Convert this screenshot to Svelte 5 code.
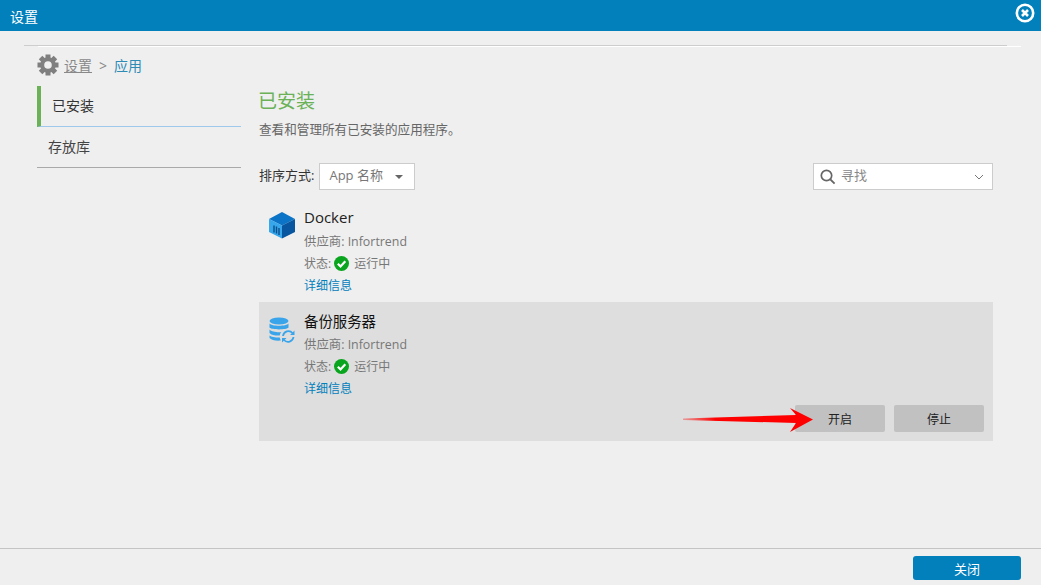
<script>
    const apps = [
        { name: 'Docker', icon: 'docker', active: false },
        { name: '备份服务器', icon: 'backup', active: true }
    ];
    const teeth = [0, 45, 90, 135, 180, 225, 270, 315];
</script>

<div class="window">
    <header class="titlebar">
        <span>设置</span>
        <svg class="close-x" width="20" height="20" viewBox="0 0 20 20">
            <circle cx="10" cy="10" r="8.200" fill="none" stroke="#fff" stroke-width="2.600" />
            <path d="M7 7l6 6M13 7l-6 6" stroke="#fff" stroke-width="2.600" />
        </svg>
    </header>

    <main class="body">
        <div class="clipped">
            <span class="clipped-text">应用程序</span>
        </div>
        <div class="rule"></div>

        <nav class="crumbs">
            <svg width="22" height="22" viewBox="0 0 22 22">
                <g fill="#7f7f7f">
                    {#each teeth as angle}
                        <rect x="8.500" y="0.500" width="5" height="5" transform="rotate({angle} 11 11)" />
                    {/each}
                </g>
                <circle cx="11" cy="11" r="5.800" fill="none" stroke="#7f7f7f" stroke-width="4" />
            </svg>
            <a class="parent" href="#top">设置</a>
            <span class="sep">&gt;</span>
            <span class="current">应用</span>
        </nav>

        <div class="columns">
            <aside class="side">
                <div class="side-item selected">已安装</div>
                <div class="side-item">存放库</div>
            </aside>

            <section class="content">
                <h1>已安装</h1>
                <p class="desc">查看和管理所有已安装的应用程序。</p>

                <div class="toolbar">
                    <label class="sort-label" for="sort">排序方式:</label>
                    <div class="select" id="sort">App 名称<span class="caret"></span></div>
                    <div class="search">
                        <svg width="16" height="16" viewBox="0 0 16 16">
                            <circle cx="6.500" cy="6.500" r="5.200" fill="none" stroke="#666" stroke-width="1.700" />
                            <path d="M10.300 10.300l4.300 4.300" stroke="#666" stroke-width="1.900" />
                        </svg>
                        <span class="search-text">寻找</span>
                        <svg class="chev" width="10" height="6" viewBox="0 0 10 6">
                            <path d="M1 1l4 4 4-4" fill="none" stroke="#777" stroke-width="1" />
                        </svg>
                    </div>
                </div>

                {#each apps as app}
                    <article class="app" class:active={app.active}>
                        <div class="app-icon">
                            {#if app.icon === 'docker'}
                                <svg width="28" height="28" viewBox="0 0 28 28">
                                    <path d="M14 1L27 8l-13 6.500L1 8z" fill="#0b74c6" />
                                    <path d="M1 8l13 6.500V27.500L1 21z" fill="#37a6ea" />
                                    <path d="M14 14.500L27 8v13l-13 6.500z" fill="#07569f" />
                                    <path d="M6 14.500v7M8.500 15.500v7M11 17v7" stroke="#0a4f8c" stroke-width="1.400" />
                                </svg>
                            {:else}
                                <svg width="28" height="28" viewBox="0 0 28 28">
                                    <g fill="#39a4ea">
                                        <ellipse cx="11" cy="5" rx="9.500" ry="3.500" />
                                        <path d="M1.500 7.500c2 3 17 3 19 0v4c-2 2.500-17 2.500-19 0z" />
                                        <path d="M1.500 13.500c2 2.500 9 3 12 2.500-1 1-1.500 2-1.700 3.500-4 .3-8.500-.5-10.300-2.500z" />
                                        <path d="M1.500 19.500c2 1.500 6 2.200 10.300 2.100.2 1 .5 2 1 2.900-4.800.5-9.800-.5-11.300-2.500z" />
                                    </g>
                                    <path d="M15 20a5.500 5.500 0 0 1 9.500-3M25.500 21a5.500 5.500 0 0 1-9.500 3" fill="none" stroke="#39a4ea" stroke-width="1.800" />
                                    <path d="M26.500 14.500v4.500H22zM14 26.500V22h4.500z" fill="#39a4ea" />
                                </svg>
                            {/if}
                        </div>
                        <div class="app-info">
                            <div class="app-name">{app.name}</div>
                            <div class="meta vendor">供应商: Infortrend</div>
                            <div class="meta status">
                                状态:
                                <svg width="15" height="15" viewBox="0 0 15 15">
                                    <circle cx="7.500" cy="7.500" r="7.500" fill="#0aa51e" />
                                    <path d="M3.800 7.800l2.700 2.600 4.800-5.200" fill="none" stroke="#fff" stroke-width="2.200" />
                                </svg>
                                <span>运行中</span>
                            </div>
                            <a class="more" href="#top">详细信息</a>
                        </div>
                        {#if app.active}
                            <div class="actions">
                                <button>开启</button>
                                <button>停止</button>
                            </div>
                        {/if}
                    </article>
                {/each}
            </section>
        </div>

        <!-- annotation drawn over the screenshot -->
        <svg class="arrow" width="130" height="28" viewBox="0 0 130 28">
            <defs>
                <linearGradient id="fade" x1="0" x2="1" y1="0" y2="0">
                    <stop offset="0" stop-color="#ff0000" stop-opacity="0.300" />
                    <stop offset="0.250" stop-color="#ff0000" />
                </linearGradient>
            </defs>
            <path d="M0 11.500L113 8 107 1 130 12.500 107 25 113 16 0 13z" fill="url(#fade)" />
        </svg>
    </main>

    <footer class="footer">
        <button class="close-btn">关闭</button>
    </footer>
</div>

<style>
    :global(body) {
        margin: 0;
        background: #efefef;
    }

    .window {
        width: 1041px;
        height: 585px;
        display: flex;
        flex-direction: column;
        overflow: hidden;
        font-family: "Open Sans", "Noto Sans CJK SC", sans-serif;
        font-size: 12px;
        color: #333;
    }

    .titlebar {
        height: 31px;
        flex: none;
        background: #0280bc;
        color: #fff;
        font-size: 14px;
        padding: 3px 6px 0 10px;
        box-sizing: border-box;
        display: flex;
        justify-content: space-between;
        line-height: 28px;
    }

    .body {
        flex: 1;
        position: relative;
        min-height: 0;
    }

    .clipped {
        height: 14px;
        padding-left: 37px;
        overflow: hidden;
    }

    .clipped-text {
        display: block;
        margin-top: -12px;
        line-height: 14px;
        color: #444;
        font-size: 12px;
    }

    .rule {
        margin-left: 24px;
        width: 983px;
        height: 1px;
        background: #cdcdcd;
        box-shadow: 14px 1px 0 #fff;
    }

    .crumbs {
        display: flex;
        align-items: center;
        height: 40px;
        padding: 0 0 2px 37px;
        box-sizing: border-box;
        font-size: 14px;
        color: #888;
    }

    .crumbs svg {
        margin-right: 5px;
    }

    .parent {
        color: #888;
    }

    .sep {
        margin: 0 7px;
    }

    .current {
        color: #2e8bb5;
    }

    .columns {
        display: flex;
        padding-left: 37px;
    }

    .side {
        width: 204px;
        margin-right: 18px;
        flex: none;
    }

    .side-item {
        height: 41px;
        box-sizing: border-box;
        border-bottom: 1px solid #a9a9a9;
        padding-left: 11px;
        line-height: 39px;
        font-size: 14px;
        color: #444;
    }

    .side-item.selected {
        border-left: 4px solid #6ab158;
        border-bottom-color: #9fc8ec;
        color: #333;
    }

    .content {
        width: 734px;
    }

    h1 {
        margin: 0 0 0 -1px;
        font-size: 19px;
        font-weight: 400;
        line-height: 30px;
        color: #6ab158;
    }

    .desc {
        margin: 5px 0 0;
        font-size: 12.600px;
        line-height: 18px;
        color: #666;
    }

    .toolbar {
        display: flex;
        align-items: center;
        margin-top: 24px;
        height: 27px;
    }

    .sort-label {
        font-size: 13px;
        color: #333;
        margin-right: 5px;
        padding-bottom: 5px;
    }

    .select {
        width: 96px;
        height: 27px;
        box-sizing: border-box;
        border: 1px solid #ccc;
        background: #fff;
        padding-left: 9px;
        font-size: 13px;
        line-height: 23px;
        color: #777;
        position: relative;
    }

    .caret {
        position: absolute;
        right: 11px;
        top: 11px;
        border: 4px solid transparent;
        border-top: 4px solid #666;
    }

    .search {
        margin-left: auto;
        width: 180px;
        height: 27px;
        box-sizing: border-box;
        border: 1px solid #ccc;
        background: #fff;
        display: flex;
        align-items: center;
        padding-left: 6px;
        color: #888;
        font-size: 13px;
    }

    .search-text {
        margin-left: 5px;
        padding-bottom: 4px;
    }

    .chev {
        margin-left: auto;
        margin-right: 8px;
    }

    .app {
        display: flex;
        position: relative;
        height: 103px;
        padding-top: 9px;
        box-sizing: border-box;
    }

    .toolbar + .app {
        margin-top: 9px;
    }

    .app.active {
        background: #dedede;
        height: 139px;
        padding-top: 10px;
    }

    .app-icon {
        width: 28px;
        height: 28px;
        margin: 3px 8px 0 9px;
    }

    .active .app-icon {
        margin-top: 4px;
    }

    .app-name {
        font-size: 15px;
        line-height: 19px;
        margin-bottom: 6px;
        color: #222;
    }

    .active .app-name {
        color: #111;
        font-size: 14.400px;
        margin-bottom: 5px;
    }

    .meta {
        margin-top: 4px;
        line-height: 18px;
        color: #777;
    }

    .vendor {
        font-size: 12.400px;
    }

    .status {
        display: flex;
        align-items: center;
        gap: 3px;
    }

    .status span {
        margin-left: 1px;
    }

    .status svg {
        margin: 0 1px -1px 0;
        transform: translateY(-1px);
    }

    .more {
        display: block;
        margin-top: 4px;
        line-height: 18px;
        color: #0280bc;
        text-decoration: none;
    }

    .actions {
        position: absolute;
        right: 9px;
        bottom: 9px;
        display: flex;
        gap: 9px;
    }

    .actions button {
        width: 90px;
        height: 27px;
        border: 0;
        border-radius: 2px;
        background: #c1c1c1;
        font: inherit;
        color: #222;
        padding: 0;
    }

    .arrow {
        position: absolute;
        left: 683px;
        top: 376px;
    }

    .footer {
        height: 37px;
        flex: none;
        border-top: 1px solid #c4c4c4;
        box-sizing: border-box;
        display: flex;
        justify-content: flex-end;
        align-items: flex-start;
        padding: 7px 20px 0 0;
    }

    .close-btn {
        width: 108px;
        height: 24px;
        border: 0;
        border-radius: 3px;
        background: #0280bc;
        color: #fff;
        font: inherit;
        font-size: 13px;
        padding: 0;
    }
</style>
